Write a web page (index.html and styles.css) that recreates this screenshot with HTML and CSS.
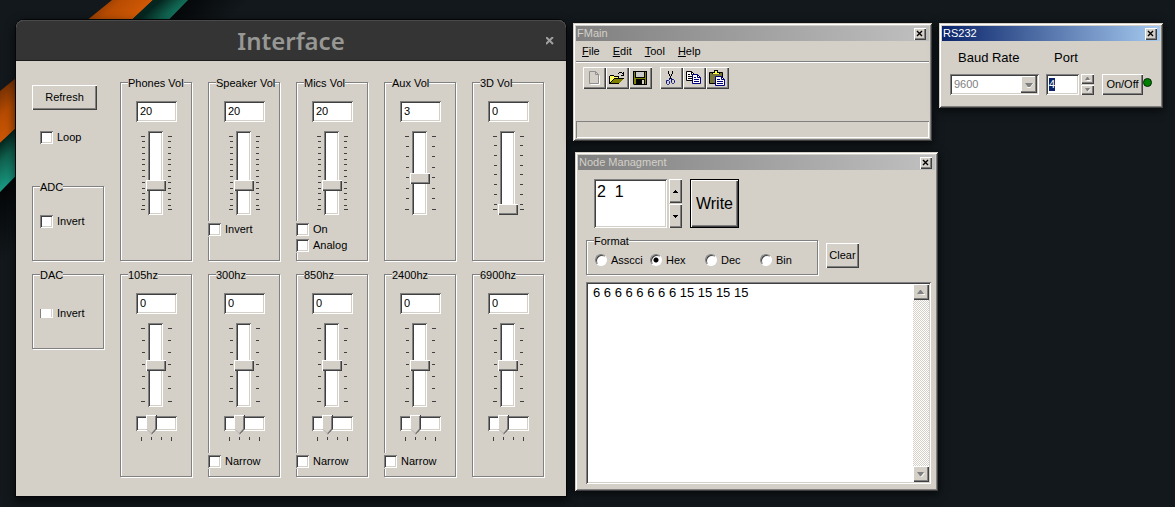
FILE: index.html
```html
<!DOCTYPE html>
<html lang="en">
<head>
<meta charset="utf-8">
<title>Interface</title>
<link rel="stylesheet" href="styles.css">
</head>
<body>
<svg class="defs" width="0" height="0" aria-hidden="true">
  <symbol id="close" viewBox="0 0 12 12"><path d="M3 3l5 5M8 3l-5 5" stroke="#000" stroke-width="1.400" fill="none"/></symbol>
  <symbol id="ticks-14" viewBox="0 0 31 84"><path d="M0 5.5h4m23 0h4M1 10.5h3m23 0h3M1 16.5h3m23 0h3M1 22.5h3m23 0h3M1 28.5h3m23 0h3M1 33.5h3m23 0h3M1 39.5h3m23 0h3M1 45.5h3m23 0h3M1 51.5h3m23 0h3M1 57.5h3m23 0h3M1 62.5h3m23 0h3M1 68.5h3m23 0h3M1 74.5h3m23 0h3M0 78.5h4m23 0h4" stroke="#404040"/></symbol>
  <symbol id="ticks-8" viewBox="0 0 31 84"><path d="M0 5.5h4m23 0h4M1 15.5h3m23 0h3M1 25.5h3m23 0h3M1 36.5h3m23 0h3M1 46.5h3m23 0h3M1 57.5h3m23 0h3M1 67.5h3m23 0h3M0 78.5h4m23 0h4" stroke="#404040"/></symbol>
  <symbol id="ticks-9" viewBox="0 0 31 84"><path d="M0 5.5h4m23 0h4M1 14.5h3m23 0h3M1 24.5h3m23 0h3M1 34.5h3m23 0h3M1 43.5h3m23 0h3M1 53.5h3m23 0h3M1 63.5h3m23 0h3M1 73.5h3m23 0h3M0 78.5h4m23 0h4" stroke="#404040"/></symbol>
  <symbol id="ticks-7" viewBox="0 0 31 84"><path d="M0 5.5h4m23 0h4M1 17.5h3m23 0h3M1 29.5h3m23 0h3M1 41.5h3m23 0h3M1 53.5h3m23 0h3M1 65.5h3m23 0h3M0 78.5h4m23 0h4" stroke="#404040"/></symbol>
  <symbol id="ticks-h" viewBox="0 0 41 4"><path d="M5.5 0v4M15.5 0v3M25.5 0v3M35.5 0v4" stroke="#404040"/></symbol>
</svg>

<svg class="wallpaper" width="300" height="300" viewBox="0 0 300 300" aria-hidden="true">
  <defs>
    <linearGradient id="orange" x1="0" y1="85" x2="36" y2="122" gradientUnits="userSpaceOnUse"><stop offset="0" stop-color="#6a2c04"/><stop offset=".45" stop-color="#b84c02"/><stop offset="1" stop-color="#d65c06"/></linearGradient>
    <linearGradient id="teal" x1="0" y1="143" x2="24" y2="170" gradientUnits="userSpaceOnUse"><stop offset="0" stop-color="#05261f"/><stop offset=".4" stop-color="#10624f"/><stop offset="1" stop-color="#189a82"/></linearGradient>
    <linearGradient id="shade" x1="0" y1="192" x2="36" y2="226" gradientUnits="userSpaceOnUse"><stop offset="0" stop-color="#040607"/><stop offset="1" stop-color="#12181c"/></linearGradient>
  </defs>
  <path d="M0 192L188 0h80L0 272z" fill="url(#shade)"/>
  <path d="M0 91L112 0h41L0 143z" fill="url(#orange)"/>
  <path d="M0 143L153 0h35L0 192z" fill="url(#teal)"/>
</svg>

<main class="desktop">
  <section class="mixer">
    <header class="mixer-title">
      <h1>Interface</h1>
      <button class="mixer-close" type="button" aria-label="Close"><svg width="8" height="8" viewBox="0 0 8 8"><path d="M0 0l7 7M7 0L0 7" stroke="#a0a09e" stroke-width="2"/></svg></button>
    </header>
    <div class="mixer-body">
      <div class="side">
        <button class="button refresh" type="button">Refresh</button>
        <label class="check loop"><input type="checkbox">Loop</label>
        <fieldset class="group adc"><legend>ADC</legend><label class="check"><input type="checkbox">Invert</label></fieldset>
      </div>
      <fieldset class="group">
        <legend>Phones Vol</legend>
        <div class="strip">
          <input class="field" type="text" value="20" aria-label="Phones volume value">
          <div class="fader"><svg width="31" height="84"><use href="#ticks-14"/></svg><input type="range" min="0" max="60" value="20" aria-label="Phones volume"></div>
        </div>
      </fieldset>
      <fieldset class="group">
        <legend>Speaker Vol</legend>
        <div class="strip">
          <input class="field" type="text" value="20" aria-label="Speaker volume value">
          <div class="fader"><svg width="31" height="84"><use href="#ticks-14"/></svg><input type="range" min="0" max="60" value="20" aria-label="Speaker volume"></div>
        </div>
        <div class="options"><label class="check"><input type="checkbox">Invert</label></div>
      </fieldset>
      <fieldset class="group">
        <legend>Mics Vol</legend>
        <div class="strip">
          <input class="field" type="text" value="20" aria-label="Mics volume value">
          <div class="fader"><svg width="31" height="84"><use href="#ticks-14"/></svg><input type="range" min="0" max="60" value="20" aria-label="Mics volume"></div>
        </div>
        <div class="options"><label class="check"><input type="checkbox">On</label><label class="check"><input type="checkbox">Analog</label></div>
      </fieldset>
      <fieldset class="group">
        <legend>Aux Vol</legend>
        <div class="strip">
          <input class="field" type="text" value="3" aria-label="Aux volume value">
          <div class="fader"><svg width="31" height="84"><use href="#ticks-8"/></svg><input type="range" min="0" max="7" value="3" aria-label="Aux volume"></div>
        </div>
      </fieldset>
      <fieldset class="group">
        <legend>3D Vol</legend>
        <div class="strip">
          <input class="field" type="text" value="0" aria-label="3D volume value">
          <div class="fader"><svg width="31" height="84"><use href="#ticks-9"/></svg><input type="range" min="0" max="8" value="0" aria-label="3D volume"></div>
        </div>
      </fieldset>

      <div class="side">
        <fieldset class="group dac"><legend>DAC</legend><label class="check"><input type="checkbox">Invert</label></fieldset>
      </div>
      <fieldset class="group">
        <legend>105hz</legend>
        <div class="strip">
          <input class="field" type="text" value="0" aria-label="105hz value">
          <div class="fader"><svg width="31" height="84"><use href="#ticks-7"/></svg><input type="range" min="-6" max="6" value="0" aria-label="105hz gain"></div>
          <div class="width"><input type="range" min="0" max="3" value="1" aria-label="105hz centre"><svg width="41" height="4"><use href="#ticks-h"/></svg></div>
        </div>
      </fieldset>
      <fieldset class="group">
        <legend>300hz</legend>
        <div class="strip">
          <input class="field" type="text" value="0" aria-label="300hz value">
          <div class="fader"><svg width="31" height="84"><use href="#ticks-7"/></svg><input type="range" min="-6" max="6" value="0" aria-label="300hz gain"></div>
          <div class="width"><input type="range" min="0" max="3" value="1" aria-label="300hz centre"><svg width="41" height="4"><use href="#ticks-h"/></svg></div>
        </div>
        <div class="options narrow"><label class="check"><input type="checkbox">Narrow</label></div>
      </fieldset>
      <fieldset class="group">
        <legend>850hz</legend>
        <div class="strip">
          <input class="field" type="text" value="0" aria-label="850hz value">
          <div class="fader"><svg width="31" height="84"><use href="#ticks-7"/></svg><input type="range" min="-6" max="6" value="0" aria-label="850hz gain"></div>
          <div class="width"><input type="range" min="0" max="3" value="1" aria-label="850hz centre"><svg width="41" height="4"><use href="#ticks-h"/></svg></div>
        </div>
        <div class="options narrow"><label class="check"><input type="checkbox">Narrow</label></div>
      </fieldset>
      <fieldset class="group">
        <legend>2400hz</legend>
        <div class="strip">
          <input class="field" type="text" value="0" aria-label="2400hz value">
          <div class="fader"><svg width="31" height="84"><use href="#ticks-7"/></svg><input type="range" min="-6" max="6" value="0" aria-label="2400hz gain"></div>
          <div class="width"><input type="range" min="0" max="3" value="1" aria-label="2400hz centre"><svg width="41" height="4"><use href="#ticks-h"/></svg></div>
        </div>
        <div class="options narrow"><label class="check"><input type="checkbox">Narrow</label></div>
      </fieldset>
      <fieldset class="group">
        <legend>6900hz</legend>
        <div class="strip">
          <input class="field" type="text" value="0" aria-label="6900hz value">
          <div class="fader"><svg width="31" height="84"><use href="#ticks-7"/></svg><input type="range" min="-6" max="6" value="0" aria-label="6900hz gain"></div>
          <div class="width"><input type="range" min="0" max="3" value="1" aria-label="6900hz centre"><svg width="41" height="4"><use href="#ticks-h"/></svg></div>
        </div>
      </fieldset>
    </div>
  </section>

  <section class="window main-window">
    <header class="titlebar"><h2>FMain</h2><button class="close" type="button" aria-label="Close"><svg width="12" height="12"><use href="#close"/></svg></button></header>
    <nav class="menu">
      <a href="#file"><u>F</u>ile</a><a href="#edit"><u>E</u>dit</a><a href="#tool"><u>T</u>ool</a><a href="#help"><u>H</u>elp</a>
    </nav>
    <div class="toolbar">
      <div class="tools">
        <button class="tool" type="button" aria-label="New"><svg width="16" height="16" viewBox="0 0 16 16"><path d="M3.5 1.5h6l3 3v9h-9zM9.500 1.500v3h3" fill="none" stroke="#909090"/><path d="M4.500 14.500h9v-9" fill="none" stroke="#fff"/></svg></button>
        <button class="tool" type="button" aria-label="Open"><svg width="16" height="16" viewBox="0 0 16 16"><path d="M0 6h1V5h4v1h5v2h5v1h-1v1h-1v1h-1v1h-1v1h-1v1H0z" fill="#000"/><path d="M1 6h4v1h4v1H5v1H4v1H3v1H2v1H1z" fill="#ffff60"/><path d="M5 9h9v1h-1v1h-1v1h-1v1H2v-1h1v-1h1v-1h1z" fill="#808000"/><path d="M9 3.500h1m0-1h3m0 1h1m0 1h1m-3 1h3M14.500 2v3" stroke="#000"/></svg></button>
        <button class="tool" type="button" aria-label="Save"><svg width="16" height="16" viewBox="0 0 16 16"><path d="M1 1h14v14H2l-1-1z" fill="#000"/><path d="M2 2h1v6h10V2h1v12H2z" fill="#808000"/><path d="M4 2h8v5H4z" fill="#c8c8c8"/><path d="M4 9h9v5H4z" fill="#000"/><path d="M10 10h2v4h-2z" fill="#d4d0c8"/></svg></button>
      </div>
      <div class="tools">
        <button class="tool" type="button" aria-label="Cut"><svg width="16" height="16" viewBox="0 0 16 16"><path d="M5.500 1v3M9.500 1v3M6.500 4v2M8.500 4v2M7.500 6v3" stroke="#000"/><path d="M6.500 8v2M8.500 8v2M3.500 10.500h2l1 1v2l-1 1h-1l-1-1zM8.500 9.500h2l1 1v2l-1 1h-1l-1-1z" fill="none" stroke="#0a1480"/></svg></button>
        <button class="tool" type="button" aria-label="Copy"><svg width="16" height="16" viewBox="0 0 16 16"><path d="M.5 1.500h5l3 3v6h-8z" fill="#fff" stroke="#000"/><path d="M5.500 1.500v3h3M2 4.500h2M2 6.500h4M2 8.500h4" fill="none" stroke="#000"/><path d="M6.500 4.500h5l3 3v6h-8z" fill="#fff" stroke="#00007a"/><path d="M11.500 4.500v3h3M8 7.500h2M8 9.500h5M8 11.500h5" fill="none" stroke="#00007a"/></svg></button>
        <button class="tool" type="button" aria-label="Paste"><svg width="16" height="16" viewBox="0 0 16 16"><path d="M.5 2.500h13v11h-13z" fill="#77743a" stroke="#000"/><path d="M3 4h8V2H9V0H5v2H3z" fill="#000"/><path d="M4 3h6v1H4zM6 1h2v2H6z" fill="#ffff30"/><path d="M6.500 6.500h6l3 3v6h-9z" fill="#fff" stroke="#00007a"/><path d="M12.500 6.500v3h3M8 9.500h3M8 11.500h6M8 13.500h6" fill="none" stroke="#00007a"/></svg></button>
      </div>
    </div>
    <div class="status"></div>
  </section>

  <section class="window node-window">
    <header class="titlebar"><h2>Node Managment</h2><button class="close" type="button" aria-label="Close"><svg width="12" height="12"><use href="#close"/></svg></button></header>
    <div class="node-body">
      <div class="compose">
        <textarea class="bytes" aria-label="Bytes">2  1</textarea>
        <div class="spin tall">
          <button type="button" aria-label="Up"><svg width="5" height="3" viewBox="0 0 5 3"><path d="M0 3h5v-1h-1v-1h-1v-1h-1v1h-1v1h-1z"/></svg></button>
          <button type="button" aria-label="Down"><svg width="5" height="3" viewBox="0 0 5 3"><path d="M0 0h5v1h-1v1h-1v1h-1v-1h-1v-1h-1z"/></svg></button>
        </div>
        <button class="write" type="button">Write</button>
      </div>
      <div class="format-row">
        <fieldset class="group format">
          <legend>Format</legend>
          <div class="radios">
            <label><input type="radio" name="format">Asscci</label>
            <label><input type="radio" name="format" checked>Hex</label>
            <label><input type="radio" name="format">Dec</label>
            <label><input type="radio" name="format">Bin</label>
          </div>
        </fieldset>
        <button class="button clear" type="button">Clear</button>
      </div>
      <div class="log">
        <textarea aria-label="Log">6 6 6 6 6 6 6 6 15 15 15 15</textarea>
        <div class="scrollbar">
          <button type="button" aria-label="Scroll up"><svg width="8" height="5" viewBox="0 0 8 5"><path d="M1 5h7v-1H7z" fill="#fff"/><path d="M0 4h7L4 0H3z" fill="#808080"/></svg></button>
          <button type="button" aria-label="Scroll down"><svg width="8" height="5" viewBox="0 0 8 5"><path d="M5 5L8 1H7L4 5z" fill="#fff"/><path d="M0 0h7L4 4H3z" fill="#808080"/></svg></button>
        </div>
      </div>
    </div>
  </section>

  <section class="window serial-window">
    <header class="titlebar active"><h2>RS232</h2><button class="close" type="button" aria-label="Close"><svg width="12" height="12"><use href="#close"/></svg></button></header>
    <div class="serial-body">
      <div class="baud">
        <label for="baud">Baud Rate</label>
        <select id="baud" disabled><option>9600</option></select>
      </div>
      <div class="port">
        <label for="port">Port</label>
        <div class="port-row">
          <input id="port" class="field" type="text" value="4">
          <div class="spin small">
            <button type="button" aria-label="Port up"><svg width="6" height="4" viewBox="0 0 6 4"><path d="M1 4h5l-2-2z" fill="#fff"/><path d="M0 3h5L3 0H2z" fill="#808080"/></svg></button>
            <button type="button" aria-label="Port down"><svg width="6" height="4" viewBox="0 0 6 4"><path d="M3 4l3-3-3 1z" fill="#fff"/><path d="M0 0h5L3 3H2z" fill="#808080"/></svg></button>
          </div>
        </div>
      </div>
      <button class="button onoff" type="button">On/Off</button>
      <span class="led"></span>
    </div>
  </section>
</main>
</body>
</html>
```

FILE: styles.css
```css
:root {
  --face: #d4d0c8;
  --sunken: inset 1px 1px #808080, inset -1px -1px #fff, inset 2px 2px #404040, inset -2px -2px #d4d0c8;
  --raised: inset 1px 1px #fff, inset -1px -1px #404040, inset -2px -2px #808080;
}

* { box-sizing: border-box; }

body {
  margin: 0;
  min-height: 100vh;
  overflow: hidden;
  background: #12181c;
  color: #000;
  font: 11px/13px "Liberation Sans", Arial, sans-serif;
}

svg { display: block; flex: none; }
.defs { position: absolute; }
.wallpaper { position: absolute; top: 0; left: 0; }

button, input, textarea, select {
  margin: 0;
  padding: 0;
  border: 0;
  border-radius: 0;
  color: #000;
  font: inherit;
}

h1, h2 { margin: 0; }
.desktop { position: relative; min-height: 100vh; }

/* Mixer window */
.mixer {
  position: absolute;
  left: 16px;
  top: 20px;
  width: 550px;
  border-radius: 8px 8px 0 0;
  background: var(--face);
  box-shadow: 0 0 0 1px #050607, 0 4px 10px 2px rgba(0, 0, 0, .6);
}

.mixer-title {
  display: grid;
  grid-template-columns: 1fr auto 1fr;
  align-items: center;
  height: 41px;
  padding: 0 12px;
  border-bottom: 1px solid #1c1c1c;
  border-radius: 8px 8px 0 0;
  background: #343434;
  box-shadow: inset 0 1px #4a4a4a;
}

.mixer-title h1 {
  grid-column: 2;
  color: #979794;
  font: 600 24px/42px "Noto Sans", "Open Sans", sans-serif;
}

.mixer-close { justify-self: end; background: none; }

.mixer-body {
  display: grid;
  grid-template-columns: repeat(6, 1fr);
  gap: 5px 15px;
  padding: 14px 21px 18px 16px;
}

.side { display: flex; flex-direction: column; }

.group {
  min-width: 0;
  margin: 0 1px 1px 0;
  padding: 0 0 7px;
  border: 1px solid #808080;
  box-shadow: inset 1px 1px #fff, 1px 1px #fff;
}

.group legend {
  margin-left: 7px;
  padding: 2px 0 0;
  background: var(--face);
  white-space: nowrap;
}

.button { background: var(--face); box-shadow: var(--raised); }
.refresh { width: 65px; height: 25px; margin-top: 10px; }

.check {
  display: flex;
  align-items: center;
  gap: 4px;
  height: 16px;
}

.check input {
  flex: none;
  width: 13px;
  height: 13px;
  appearance: none;
  background: #fff;
  box-shadow: var(--sunken);
}

.loop { margin: 19px 0 0 8px; }
.adc { margin-top: auto; padding: 19px 0 31px 7px; }
.dac { padding: 23px 0 27px 7px; }
.adc legend, .dac legend { margin-left: 0; }
.dac .check input { height: 9px; box-shadow: inset 1px 0 #808080, inset -1px -1px #fff, inset -2px 0 #d4d0c8; }

.strip { display: flex; flex-direction: column; padding: 11px 0 0 15px; }

.field {
  width: 41px;
  height: 21px;
  padding: 0 4px 1px;
  background: #fff;
  box-shadow: var(--sunken);
}

.fader { display: grid; margin: 9px 0 0 5px; }
.fader svg, .fader input { grid-area: 1 / 1; }

.fader input {
  width: 20px;
  height: 84px;
  margin-left: 4px;
  appearance: none;
  writing-mode: vertical-lr;
  direction: rtl;
  background: none;
}

.fader input::-webkit-slider-runnable-track {
  width: 15px;
  height: 84px;
  background: #fff;
  box-shadow: var(--sunken);
}

.fader input::-webkit-slider-thumb {
  appearance: none;
  width: 20px;
  height: 11px;
  margin-left: -2px;
  background: var(--face);
  box-shadow: var(--raised);
}

.width { display: grid; gap: 2px; margin-top: 8px; }

.width input {
  width: 41px;
  height: 20px;
  padding-bottom: 3px;
  appearance: none;
  background: none;
}

.width input::-webkit-slider-runnable-track {
  height: 15px;
  background: #fff;
  box-shadow: var(--sunken);
}

.width input::-webkit-slider-thumb {
  appearance: none;
  width: 11px;
  height: 20px;
  margin-top: -1px;
  background: url("data:image/svg+xml,%3Csvg xmlns='http://www.w3.org/2000/svg' width='11' height='20'%3E%3Cpath d='M0 0h11v14l-5.500 5.500L0 14z' fill='%23404040'/%3E%3Cpath d='M0 0h10v14l-4.500 5L0 14z' fill='%23808080'/%3E%3Cpath d='M0 0h10v1H1v13l4.500 4.500v1L0 14z' fill='%23fff'/%3E%3Cpath d='M1 1h8v13l-3.500 4L1 14z' fill='%23d4d0c8'/%3E%3C/svg%3E") no-repeat;
}

.options { margin: 6px 0 0 -1px; }
.options.narrow { margin-top: 12px; }
.options .check { width: 64px; background: var(--face); }

/* Classic windows */
.window {
  position: absolute;
  display: flex;
  flex-direction: column;
  padding: 3px;
  background: var(--face);
  box-shadow: inset 1px 1px #d4d0c8, inset -1px -1px #404040, inset 2px 2px #fff, inset -2px -2px #808080, 0 2px 8px 1px rgba(0, 0, 0, .6);
}

.titlebar {
  display: flex;
  align-items: center;
  justify-content: space-between;
  height: 15px;
  padding: 0 3px 0 1px;
  background: linear-gradient(90deg, #808080, #c0c0c0);
  color: #d4d0c8;
}

.titlebar.active { background: linear-gradient(90deg, #0a246a, #a6caf0); color: #fff; }
.titlebar h2 { font: inherit; }
.close { width: 12px; height: 12px; background: var(--face); box-shadow: var(--raised); }

.main-window { left: 573px; top: 23px; width: 359px; height: 118px; }

.menu {
  display: flex;
  gap: 13px;
  padding: 4px 6px 3px;
  border-bottom: 1px solid #808080;
  box-shadow: 0 1px #fff;
}

.menu a { color: #000; text-decoration: none; }
.toolbar { display: flex; gap: 8px; padding: 5px 7px; }
.tools { display: flex; }

.tool {
  display: grid;
  place-items: center;
  width: 23px;
  height: 22px;
  padding-right: 2px;
  background: var(--face);
  box-shadow: var(--raised);
}

.status { height: 17px; margin-top: auto; box-shadow: inset 1px 1px #808080, inset -1px -1px #fff; }

.node-window { left: 575px; top: 152px; width: 363px; height: 339px; }
.node-body { display: flex; flex: 1; flex-direction: column; padding: 9px 4px 4px 8px; }
.compose { display: flex; height: 49px; padding-left: 8px; }

.bytes {
  width: 73px;
  padding: 4px 3px;
  resize: none;
  background: #fff;
  box-shadow: var(--sunken);
  font-size: 16px;
  line-height: 18px;
}

.spin { display: grid; gap: 1px; }
.spin button { display: grid; place-items: center; background: var(--face); box-shadow: var(--raised); }
.spin.tall { width: 13px; margin: 0 8px 0 2px; }

.write {
  width: 49px;
  border: 1px solid #000;
  background: var(--face);
  box-shadow: inset 1px 1px #fff, inset -1px -1px #404040, inset -2px -2px #808080;
  font-size: 16px;
}

.format-row { display: flex; align-items: flex-start; gap: 8px; margin-top: 5px; }
.format { width: 232px; height: 42px; margin: 0; padding: 0; }
.radios { display: grid; grid-template-columns: repeat(4, 55px); padding: 5px 0 0 8px; }
.radios label { display: flex; align-items: center; gap: 4px; height: 14px; }

.radios input {
  width: 12px;
  height: 12px;
  appearance: none;
  border: 1px solid;
  border-color: #808080 #fff #fff #808080;
  border-radius: 50%;
  background: #fff;
  box-shadow: inset 1px 1px #404040;
}

.radios input:checked { background: radial-gradient(circle, #000 2px, #fff 3px); }
.clear { width: 33px; height: 25px; margin-top: 10px; }

.log {
  display: flex;
  flex: 1;
  margin-top: 7px;
  padding: 2px;
  background: #fff;
  box-shadow: var(--sunken);
}

.log textarea {
  flex: 1;
  padding: 1px 5px;
  resize: none;
  background: none;
  font-size: 13px;
  line-height: 15px;
}

.scrollbar {
  display: flex;
  flex-direction: column;
  justify-content: space-between;
  width: 16px;
  background: repeating-conic-gradient(#d4d0c8 0 25%, #fff 0 50%) 0 0 / 2px 2px;
}

.scrollbar button { display: grid; place-items: center; height: 16px; background: var(--face); box-shadow: var(--raised); }

.serial-window { left: 939px; top: 23px; width: 224px; height: 85px; }
.serial-body { display: flex; align-items: flex-end; padding: 9px 8px; }
.baud, .port { display: flex; flex-direction: column; gap: 9px; }
.serial-body label { padding-left: 8px; font-size: 13px; line-height: 15px; }

.baud select {
  width: 89px;
  height: 21px;
  padding: 0 4px;
  appearance: none;
  opacity: 1;
  color: #808080;
  background: url("data:image/svg+xml,%3Csvg xmlns='http://www.w3.org/2000/svg' width='16' height='17'%3E%3Cpath d='M0 0h16v17H0z' fill='%23404040'/%3E%3Cpath d='M0 0h15v16H0z' fill='%23808080'/%3E%3Cpath d='M0 0h14v15H0z' fill='%23fff'/%3E%3Cpath d='M1 1h13v14H1z' fill='%23d4d0c8'/%3E%3Cpath d='M5 11h4l3-4h1l-4 5H8z' fill='%23fff'/%3E%3Cpath d='M4 7h8l-3 4H7z' fill='%23808080'/%3E%3C/svg%3E") right 2px top 2px no-repeat #fff;
  box-shadow: var(--sunken);
}

.port { margin-left: 7px; }
.port-row { display: flex; gap: 2px; }

.port-row .field {
  width: 33px;
  padding: 0 3px 1px;
  background: linear-gradient(#0a246a, #0a246a) 3px 4px / 6px 13px no-repeat #fff;
  color: #fff;
}

.spin.small { width: 13px; gap: 1px; }
.onoff { width: 41px; height: 21px; margin-left: 8px; }

.led {
  width: 9px;
  height: 9px;
  margin-bottom: 8px;
  border: 1px solid #042804;
  border-radius: 50%;
  background: #008000;
}
```
